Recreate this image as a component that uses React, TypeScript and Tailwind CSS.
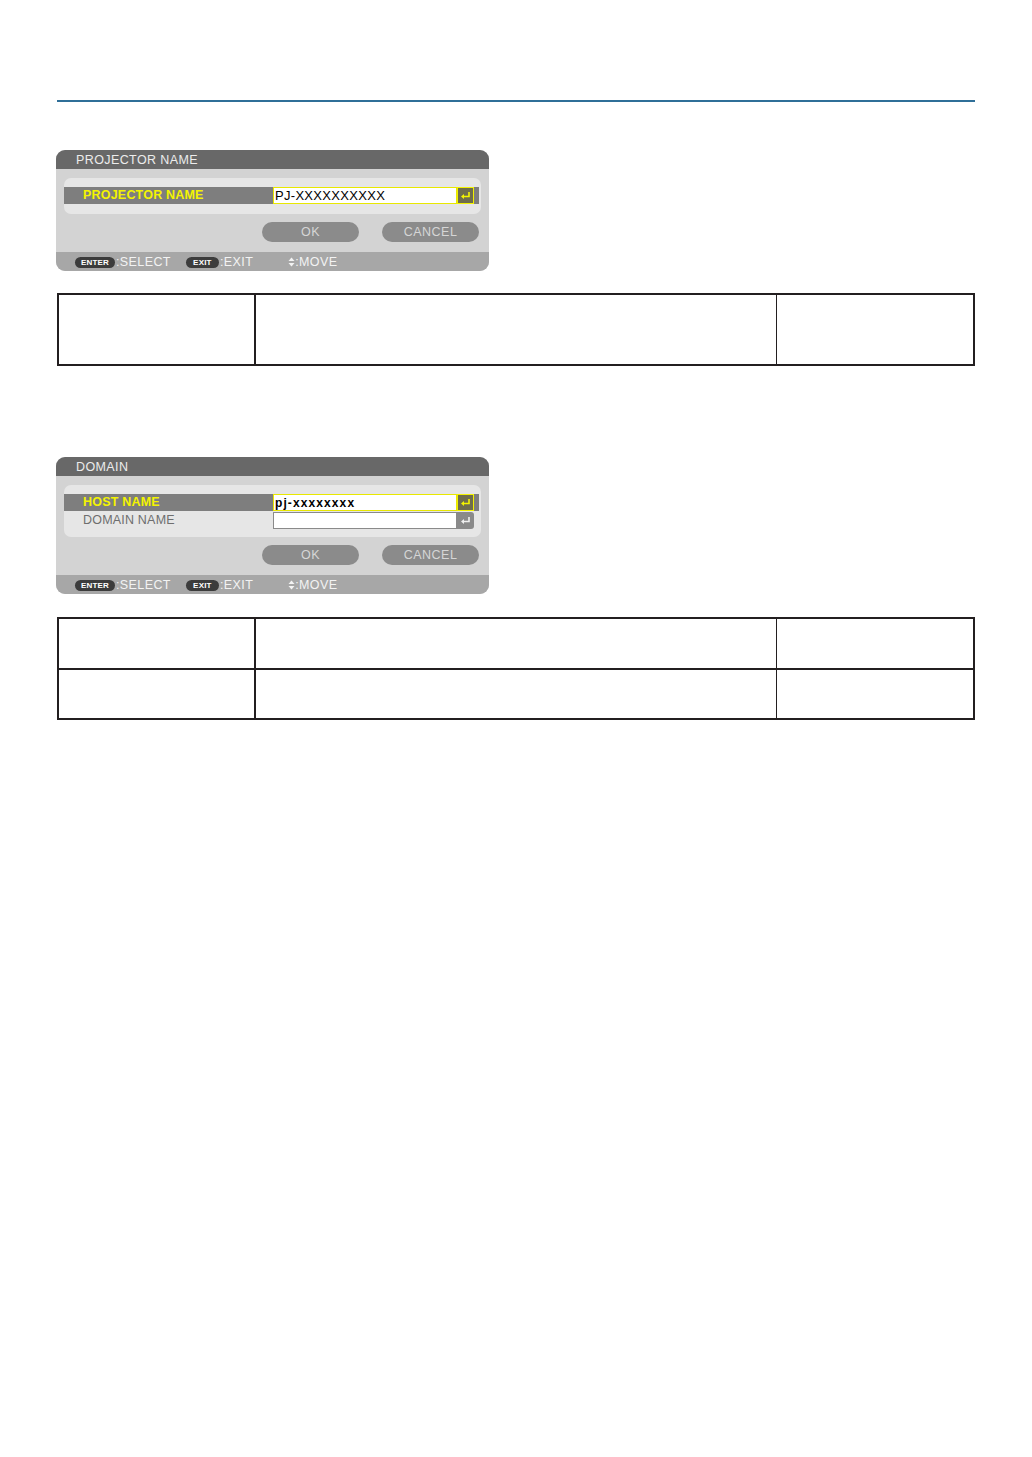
import React from "react";

const font = { fontFamily: '"Liberation Sans", Arial, sans-serif' };

function EnterIcon({ active }: { active: boolean }) {
  return (
    <div
      className={
        active
          ? "w-[17px] h-[17px] flex items-center justify-center bg-[#6f6d4c] border border-[#f2f200]"
          : "w-[17px] h-[17px] flex items-center justify-center bg-[#8a8a8a] rounded-r-[3px]"
      }
    >
      <svg width="11" height="9" viewBox="0 0 11 9">
        <path d="M9 1 V5.5 H3" fill="none" stroke={active ? "#f5f500" : "#f0f0f0"} strokeWidth="1.6" />
        <path d="M1 5.5 L4 3 L4 8 Z" fill={active ? "#f5f500" : "#f0f0f0"} />
      </svg>
    </div>
  );
}

type Row = { label: string; value: string; active: boolean; lower?: boolean };

function Badge({ text, w }: { text: string; w: string }) {
  return (
    <span
      className={`${w} h-[11px] rounded-full bg-[#3c3c3c] text-white text-[8px] font-bold leading-[11px] flex items-center justify-center tracking-[0.2px]`}
    >
      {text}
    </span>
  );
}

function Dialog({ title, rows, padBottom }: { title: string; rows: Row[]; padBottom: string }) {
  return (
    <div className="w-[433px] ml-[-1px] rounded-[9px] overflow-hidden bg-[#d3d3d3]" style={font}>
      <div className="h-[19px] bg-[#686868] text-[#ececec] text-[12.5px] leading-[20px] pl-[20px] tracking-[0.4px]">
        {title}
      </div>
      <div className="pt-[9px] px-[8px]">
        <div className={`rounded-[7px] bg-[#e6e6e6] pt-[9px] ${padBottom} flex flex-col gap-[1px]`}>
          {rows.map((r) => (
            <div
              key={r.label}
              className={`h-[17px] mr-[2px] flex items-center ${r.active ? "bg-[#7e7e7e]" : ""}`}
            >
              <div
                className={`w-[209px] pl-[19px] text-[12.5px] leading-[17px] tracking-[0.2px] ${
                  r.active ? "text-[#f4f400] font-bold" : "text-[#6e6e6e]"
                }`}
              >
                {r.label}
              </div>
              <div
                className={`w-[184px] h-[17px] bg-white flex items-center pl-[1px] text-black ${
                  r.active ? "border border-[#e8e800]" : "border border-[#8a8a8a]"
                } ${r.lower ? "text-[12px] tracking-[1.1px] font-bold" : "text-[13px] tracking-[0.3px]"}`}
              >
                {r.value}
              </div>
              <EnterIcon active={r.active} />
            </div>
          ))}
        </div>
      </div>
      <div className="flex justify-end gap-[23px] pr-[10px] pt-[8px] pb-[10px]">
        <div className="w-[97px] h-[20px] rounded-full bg-[#8b8b8b] text-[#d6d6d6] text-[12.5px] leading-[21px] text-center tracking-[0.5px]">
          OK
        </div>
        <div className="w-[97px] h-[20px] rounded-full bg-[#8b8b8b] text-[#d6d6d6] text-[12.5px] leading-[21px] text-center tracking-[0.5px]">
          CANCEL
        </div>
      </div>
      <div className="h-[19px] bg-[#a7a7a7] flex items-center pl-[19px] pt-[1px] text-[#f3f3f3] text-[12.5px] tracking-[0.4px]">
        <Badge text="ENTER" w="w-[40px]" />
        <span className="ml-[1px]">:SELECT</span>
        <span className="ml-[15px]"></span>
        <Badge text="EXIT" w="w-[33px]" />
        <span className="ml-[1px]">:EXIT</span>
        <span className="ml-[35px] flex items-center">
          <svg width="7" height="10" viewBox="0 0 7 10">
            <path d="M3.5 0.5 L6.5 4 H0.5 Z" fill="#f3f3f3" />
            <path d="M3.5 9.5 L6.5 6 H0.5 Z" fill="#f3f3f3" />
          </svg>
          <span>:MOVE</span>
        </span>
      </div>
    </div>
  );
}

function TableRow({ h, last }: { h: string; last?: boolean }) {
  return (
    <div className={`flex ${h} ${last ? "" : "border-b-2 border-[#231f20]"}`}>
      <div className="w-[197px] border-r-2 border-[#231f20]"></div>
      <div className="w-[521px] border-r border-[#231f20]"></div>
      <div className="flex-1"></div>
    </div>
  );
}

export default function App() {
  return (
    <div className="w-[1032px] h-[1457px] bg-white px-[57px] pt-[100px]">
      <div className="h-[2px] bg-[#2f6f98]"></div>
      <div className="mt-[48px]">
        <Dialog
          title="PROJECTOR NAME"
          padBottom="pb-[10px]"
          rows={[{ label: "PROJECTOR NAME", value: "PJ-XXXXXXXXXX", active: true }]}
        />
      </div>
      <div className="mt-[22px] border-2 border-[#231f20]">
        <TableRow h="h-[69px]" last />
      </div>
      <div className="mt-[91px]">
        <Dialog
          title="DOMAIN"
          padBottom="pb-[8px]"
          rows={[
            { label: "HOST NAME", value: "pj-xxxxxxxx", active: true, lower: true },
            { label: "DOMAIN NAME", value: "", active: false },
          ]}
        />
      </div>
      <div className="mt-[23px] border-2 border-[#231f20]">
        <TableRow h="h-[51px]" />
        <TableRow h="h-[48px]" last />
      </div>
    </div>
  );
}
